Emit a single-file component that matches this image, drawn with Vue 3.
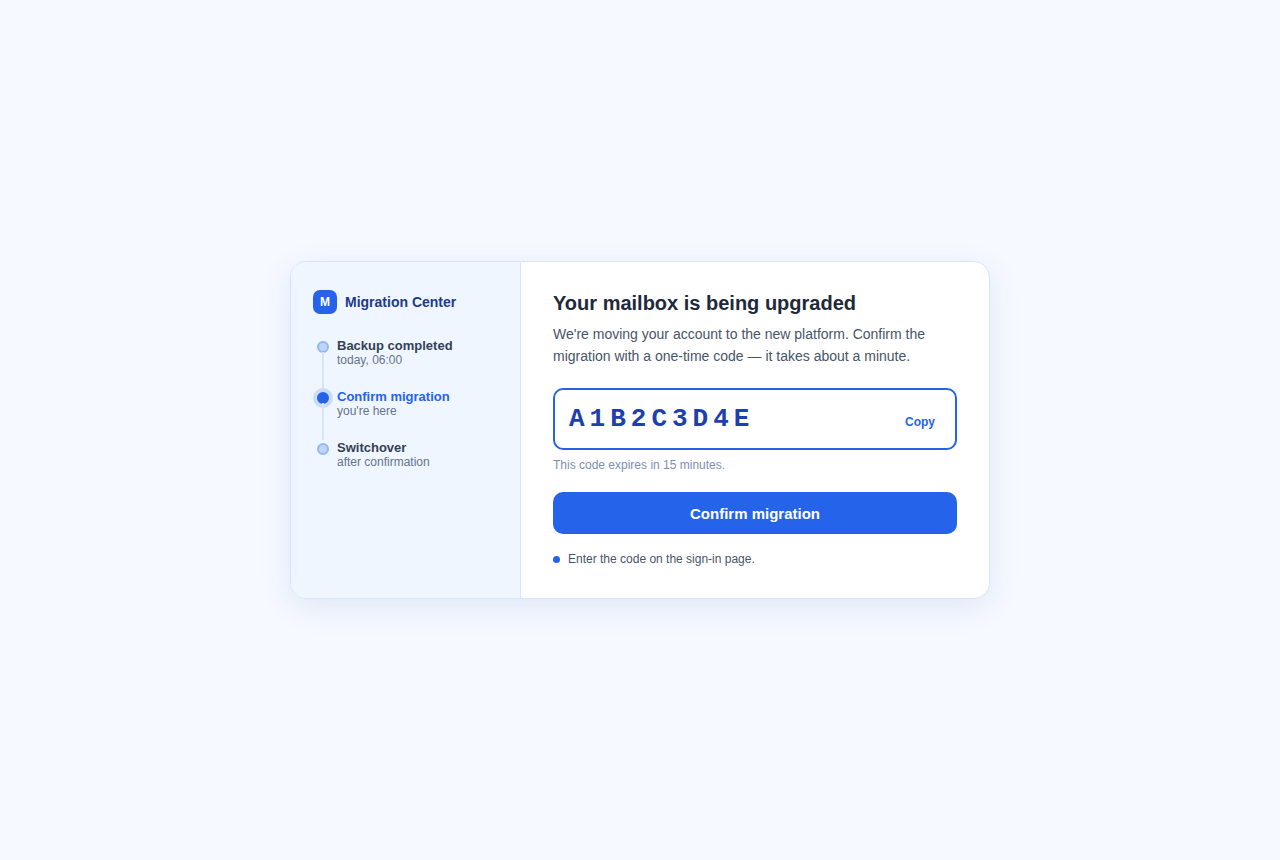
<script setup>
const steps = [
  { title: 'Backup completed', note: 'today, 06:00', active: false },
  { title: 'Confirm migration', note: "you're here", active: true },
  { title: 'Switchover', note: 'after confirmation', active: false },
]
const code = 'A1B2C3D4E'
</script>

<template>
  <main class="page">
    <div class="card">
      <aside class="side">
        <div class="brand"><span class="logo">M</span><span>Migration Center</span></div>
        <ol class="steps">
          <li v-for="s in steps" :key="s.title" class="step" :class="{ active: s.active }">
            <span class="rail"><span class="dot"></span></span>
            <div>
              <div class="title">{{ s.title }}</div>
              <div class="note">{{ s.note }}</div>
            </div>
          </li>
        </ol>
      </aside>
      <section class="content">
        <h1>Your mailbox is being upgraded</h1>
        <p class="lead">We're moving your account to the new platform. Confirm the migration with a one-time code — it takes about a minute.</p>
        <div class="codebox">
          <span class="code">{{ code }}</span>
          <button type="button" class="copy">Copy</button>
        </div>
        <p class="expiry">This code expires in 15 minutes.</p>
        <button type="button" class="confirm">Confirm migration</button>
        <p class="hint"><span class="bullet"></span>Enter the code on the sign-in page.</p>
      </section>
    </div>
  </main>
</template>

<style>
body { background: #f6f9ff; }
</style>

<style scoped>
.page {
  box-sizing: border-box;
  min-height: 100vh;
  display: flex;
  align-items: center;
  justify-content: center;
  padding: 24px;
  background: #f6f9ff;
  font-family: "Liberation Sans", Arial, sans-serif;
  color: #1e293b;
}
.card {
  box-sizing: border-box;
  width: 100%;
  max-width: 700px;
  display: grid;
  grid-template-columns: 230px 1fr;
  background: #fff;
  border: 1px solid #d9e5f7;
  border-radius: 16px;
  overflow: hidden;
  box-shadow: 0 8px 32px rgba(30, 64, 175, 0.1);
}
.side {
  padding: 28px 22px;
  background: #eff6ff;
  border-right: 1px solid #d9e5f7;
}
.brand {
  display: flex;
  align-items: center;
  gap: 8px;
  font-size: 14px;
  font-weight: 700;
  color: #1e3a8a;
}
.logo {
  width: 24px;
  height: 24px;
  display: grid;
  place-items: center;
  border-radius: 7px;
  background: #2563eb;
  color: #fff;
  font-size: 12px;
}
.steps { list-style: none; margin: 24px 0 0; padding: 0; }
.step { display: flex; gap: 4px; padding-bottom: 22px; }
.step:last-child { padding-bottom: 0; }
.rail { position: relative; width: 20px; }
.dot {
  box-sizing: border-box;
  display: block;
  width: 12px;
  height: 12px;
  margin: 3px auto 0;
  border: 2px solid #93b8f0;
  border-radius: 50%;
  background: #bfd4f8;
}
.step:not(:last-child) .rail::after {
  content: "";
  position: absolute;
  left: 9px;
  top: 14px;
  width: 2px;
  height: 37px;
  background: #d7e3fa;
}
.active .dot { background: #2563eb; border-color: #2563eb; box-shadow: 0 0 0 4px #cbdbfb; }
.title { font-size: 13px; font-weight: 700; line-height: 15px; color: #334155; }
.note { font-size: 12px; line-height: 14px; color: #64748b; }
.active .title { color: #2563eb; }
.content { padding: 28px 32px; min-width: 0; }
h1 { margin: 0; font-size: 20px; line-height: 26px; }
.lead { margin: 7px 0 0; font-size: 14px; line-height: 22px; color: #475569; }
.codebox {
  display: flex;
  align-items: center;
  justify-content: space-between;
  margin-top: 21px;
  padding: 14px;
  border: 2px solid #2563eb;
  border-radius: 10px;
}
.code {
  font-family: "Liberation Mono", monospace;
  font-size: 26px;
  line-height: 30px;
  font-weight: 700;
  letter-spacing: 5px;
  color: #1e40af;
}
.copy {
  align-self: flex-end;
  height: 24px;
  padding: 0 6px;
  border: 0;
  background: none;
  font: 700 12px "Liberation Sans", Arial, sans-serif;
  color: #2563eb;
  cursor: pointer;
}
.expiry { margin: 8px 0 0; font-size: 12px; line-height: 14px; color: #7c8fb5; }
.confirm {
  display: block;
  width: 100%;
  height: 42px;
  margin-top: 20px;
  border: 0;
  border-radius: 10px;
  background: #2563eb;
  color: #fff;
  font: 700 15px "Liberation Sans", Arial, sans-serif;
  cursor: pointer;
}
.hint { display: flex; align-items: center; gap: 8px; margin: 15px 0 0; font-size: 12px; line-height: 21px; color: #475569; }
.bullet { width: 7px; height: 7px; border-radius: 50%; background: #2563eb; }
</style>
